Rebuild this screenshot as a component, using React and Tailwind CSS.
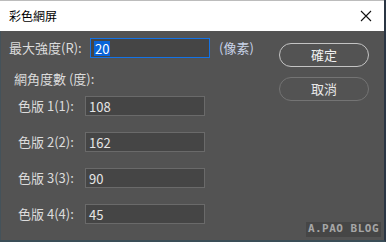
import React from 'react';

const cjk = { fontFamily: '"Noto Sans CJK TC", "Noto Sans", sans-serif' };

function Field({ value, focused }) {
  return (
    <div
      className={`h-5 w-[120px] flex items-center bg-[#454545] border pl-[3px] ${focused ? 'border-[#1473e6]' : 'border-[#6a6a6a]'
        }`}
    >
      {focused ? (
        <span className="bg-[#0a64d8] text-white text-[13px] leading-[15px] px-[1px]">{value}</span>
      ) : (
        <span className="text-[#e6e6e6] text-[13px] leading-[15px]">{value}</span>
      )}
    </div>
  );
}

export default function App() {
  const rows = [
    { label: '色版 1(1):', value: '108' },
    { label: '色版 2(2):', value: '162' },
    { label: '色版 3(3):', value: '90' },
    { label: '色版 4(4):', value: '45' },
  ];

  return (
    <div className="w-[386px] h-[242px] flex flex-col border-r-2 border-r-[#2b3644] border-b-2 border-b-[#3a4d57]" style={cjk}>
      {/* 標題列 */}
      <div className="h-[31px] bg-white flex items-center justify-between pl-[9px] pr-[11px] border-t border-t-[#bcbcbc]">
        <span className="text-[12px] text-black">彩色網屏</span>
        <svg width="12" height="12" viewBox="0 0 12 12" className="mr-[1px]">
          <path d="M1 1 L11 11 M11 1 L1 11" stroke="#111" strokeWidth="1.1" />
        </svg>
      </div>

      {/* 內容 */}
      <div className="relative flex-1 bg-[#535353] border-l border-l-[#44525a] flex text-[#dcdcdc] text-[13px]">
        <div className="flex flex-col pt-[7px]">
          <div className="flex items-center h-5 pl-[8px]">
            <span className="w-[81px]">最大強度(R):</span>
            <Field value="20" focused />
            <span className="ml-[9px] text-[#c8d2e8]">(像素)</span>
          </div>

          <div className="mt-[12px] h-[18px] flex items-center pl-[13px]">網角度數 (度):</div>

          <div className="mt-[8px] flex flex-col gap-4">
            {rows.map((r) => (
              <div key={r.label} className="flex items-center h-5 pl-[17px]">
                <span className="w-[67px]">{r.label}</span>
                <Field value={r.value} />
              </div>
            ))}
          </div>
        </div>

        <div className="ml-auto mr-[15px] pt-[12px] flex flex-col gap-[10px]">
          <button className="w-[90px] h-6 rounded-full border-[1.5px] border-[#c4c4c4] text-[#f0f0f0] text-[13px] flex items-center justify-center">
            確定
          </button>
          <button className="w-[90px] h-6 rounded-full border-[1.5px] border-[#747474] text-[#e8e8e8] text-[13px] flex items-center justify-center">
            取消
          </button>
        </div>

        {/* 浮水印 */}
        <div
          className="absolute right-[3px] bottom-[3px] h-[15px] w-[75px] bg-[#464646] flex items-center justify-center whitespace-nowrap text-[#a6a6a6] text-[11px] font-bold tracking-[0.5px]"
          style={{ fontFamily: '"DejaVu Sans Mono", monospace' }}
        >
          A.PAO BLOG
        </div>
      </div>
    </div>
  );
}
